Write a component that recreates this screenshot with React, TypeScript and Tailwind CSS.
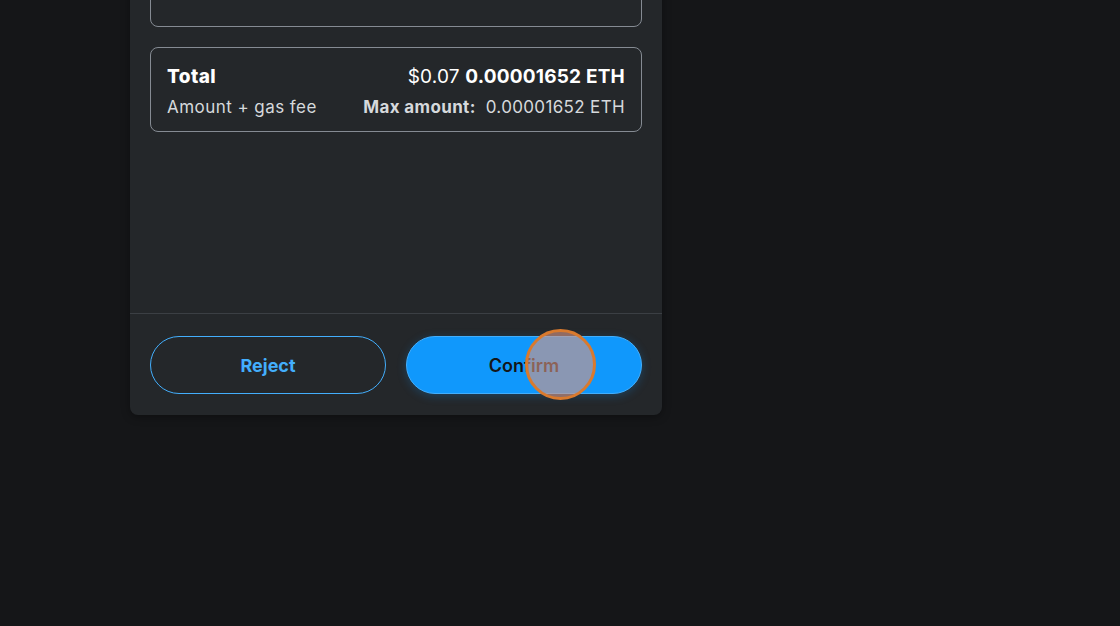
import React from "react";

export default function App() {
  return (
    <div
      className="w-[1120px] h-[626px] overflow-hidden bg-[#151618] relative"
      style={{ fontFamily: "Inter, 'Noto Sans', sans-serif" }}
    >
      <div className="ml-[130px] w-[532px] -mt-[100px] h-[515px] bg-[#24272a] rounded-b-[8px] flex flex-col shadow-[0_2px_8px_rgba(0,0,0,0.35)]">
        <div className="px-5 pt-4 flex flex-col gap-5">
          <div className="h-[111px] border border-[#858b93] rounded-[8px] flex items-end justify-center pb-[90px]">
            <span className="text-white text-sm">Edit</span>
          </div>
          <div className="border border-[#858b93] rounded-[8px] px-4 pt-[17px] pb-[11px] flex flex-col gap-[7px]">
            <div className="flex justify-between items-center h-6">
              <span className="text-white font-extrabold text-[19px] tracking-[0.4px]">Total</span>
              <span className="text-white text-[19px] tracking-[0.2px]">
                $0.07 <span className="font-bold">0.00001652 ETH</span>
              </span>
            </div>
            <div className="flex justify-between items-center h-6">
              <span className="text-[#d6d9dc] text-[17px] tracking-[0.45px]">Amount + gas fee</span>
              <span className="text-[#d6d9dc] text-[17px] tracking-[0.35px]">
                <span className="font-bold">Max amount:</span>
                <span className="ml-2.5">0.00001652 ETH</span>
              </span>
            </div>
          </div>
        </div>
        <div className="flex-1" />
        <div className="border-t border-[#3b3f44] px-5 pt-[22px] pb-[21px] flex gap-5">
          <button className="flex-1 h-[58px] rounded-full border border-[#43aefc] text-[#43aefc] font-bold text-[18px]">
            Reject
          </button>
          <button className="flex-1 h-[58px] rounded-full bg-[#1098fc] border border-[#43aefc] text-[#141618] font-semibold text-[18px] shadow-[0_2px_10px_rgba(16,152,252,0.25)]">
            Confirm
          </button>
        </div>
      </div>
      <div className="absolute left-[525px] top-[329px] w-[71px] h-[71px] rounded-full border-[3px] border-[#d97a2e] bg-[rgba(220,150,130,0.6)]" />
    </div>
  );
}
